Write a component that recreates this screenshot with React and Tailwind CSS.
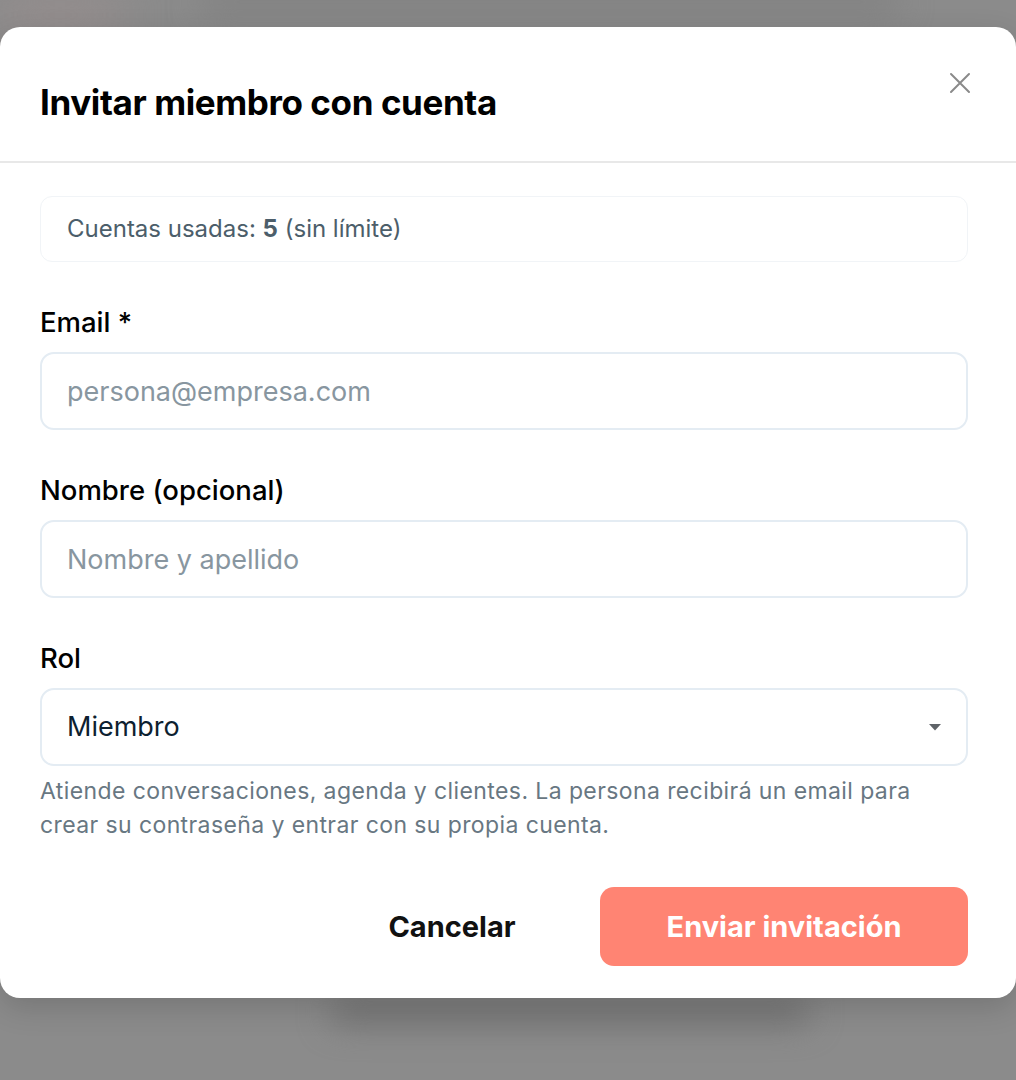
import React from "react";

export default function App() {
  return (
    <div className="relative w-[1016px] h-[1080px] overflow-hidden bg-[#8b8b8b]" style={{ fontFamily: "Inter, 'Noto Sans', sans-serif" }}>
      {/* blurred backdrop shapes */}
      <div className="absolute left-0 top-0 w-[120px] h-[30px] bg-[#9a8f8f] blur-xl" />
      <div className="absolute left-[330px] top-[1000px] w-[480px] h-[24px] bg-[#6f6f6f] blur-lg rounded-full" />
      <div className="absolute left-[200px] top-[-10px] w-[700px] h-[24px] bg-[#808080] blur-lg rounded-full" />

      <div className="relative pt-[27px]">
        <div className="relative w-[1016px] bg-white rounded-[20px] shadow-[0_10px_30px_rgba(0,0,0,0.15)]">
          {/* header */}
          <div className="pl-10 pr-12 pt-[55px] pb-[39px] border-b-2 border-[#e8e8e8]">
            <h2 className="text-[35px] leading-[40px] font-bold text-black tracking-[-0.4px]">
              Invitar miembro con cuenta
            </h2>
          </div>
          <button className="absolute right-[44px] top-[44px] w-[24px] h-[24px] flex items-center justify-center text-[#8a8a8a]">
            <svg width="24" height="24" viewBox="0 0 24 24" fill="none" stroke="currentColor" strokeWidth="2" strokeLinecap="round">
              <path d="M3 3L21 21M21 3L3 21" />
            </svg>
          </button>

          {/* body */}
          <div className="pl-10 pr-12 pt-[33px] pb-[32px] flex flex-col">
            <div className="h-[66px] rounded-[12px] border border-[#f1f4f7] bg-white flex items-center px-[26px] text-[24px] text-[#4c5e6a]">
              Cuentas usadas:&nbsp;<span className="font-bold">5</span>&nbsp;(sin límite)
            </div>

            <label className="mt-[45px] text-[27.5px] leading-[30px] font-medium text-black">Email *</label>
            <div className="mt-[15px] h-[78px] rounded-[14px] border-2 border-[#e4ecf3] flex items-center px-[25px] pt-[3px] text-[27px] text-[#8896a0]">
              persona@empresa.com
            </div>

            <label className="mt-[45px] text-[27.5px] leading-[30px] font-medium text-black">Nombre (opcional)</label>
            <div className="mt-[15px] h-[78px] rounded-[14px] border-2 border-[#e4ecf3] flex items-center px-[25px] pt-[3px] text-[27px] text-[#8896a0]">
              Nombre y apellido
            </div>

            <label className="mt-[45px] text-[27.5px] leading-[30px] font-medium text-black">Rol</label>
            <div className="mt-[15px] h-[78px] rounded-[14px] border-2 border-[#e4ecf3] flex items-center justify-between pl-[25px] pr-[25px] text-[27px] text-[#0d2130]">
              <span className="pt-[1px]">Miembro</span>
              <svg width="12" height="7" viewBox="0 0 12 7" className="mt-[1px]">
                <path d="M0 0H12L6 6.5Z" fill="#5f6368" />
              </svg>
            </div>
            <p className="mt-[8px] text-[23px] leading-[34px] tracking-[0.4px] text-[#687782] pr-[30px]">
              Atiende conversaciones, agenda y clientes. La persona recibirá un email para crear su contraseña y entrar con su propia cuenta.
            </p>

            <div className="mt-[45px] flex justify-end items-center gap-4">
              <button className="w-[264px] h-[79px] text-[29px] font-bold text-[#111111]">Cancelar</button>
              <button className="w-[368px] h-[79px] rounded-[14px] bg-[#ff8473] text-white text-[29px] font-bold">
                Enviar invitación
              </button>
            </div>
          </div>
        </div>
      </div>
    </div>
  );
}
